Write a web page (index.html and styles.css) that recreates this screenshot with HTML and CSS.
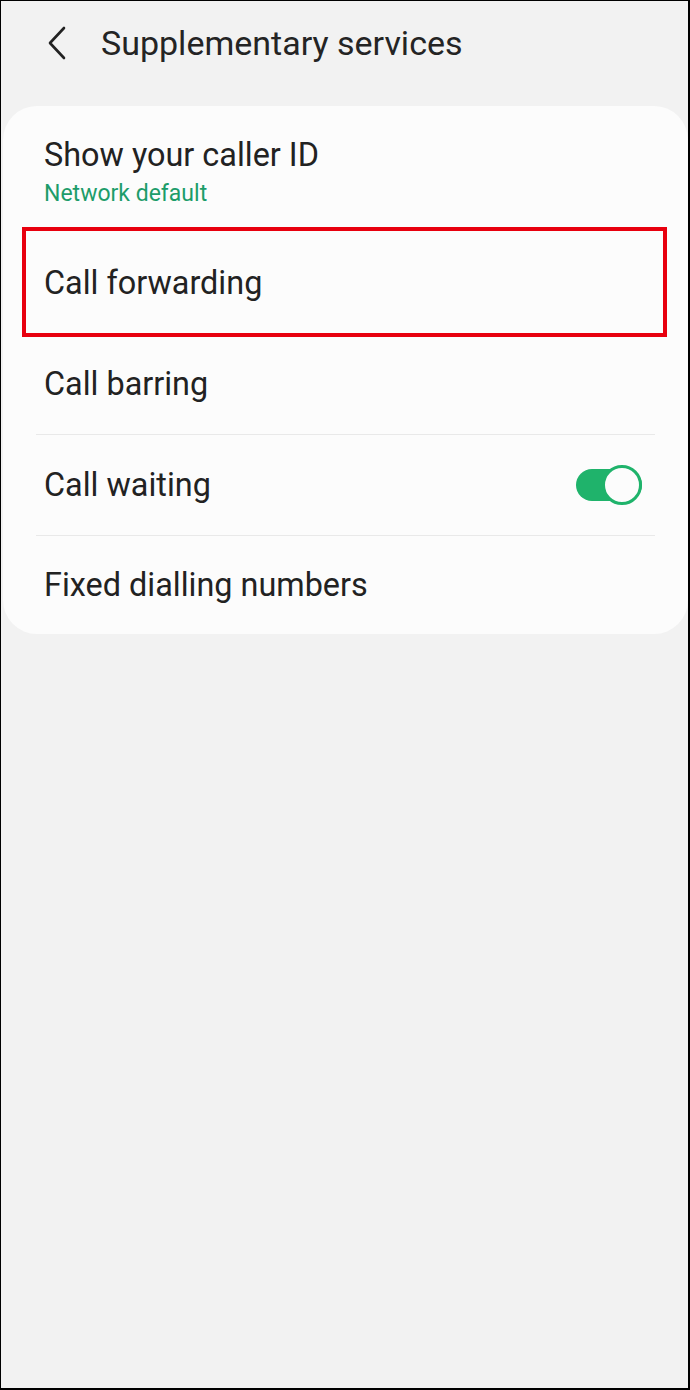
FILE: index.html
```html
<!DOCTYPE html>
<html>
<head>
<meta charset="utf-8">
<link rel="stylesheet" href="styles.css">
</head>
<body>
<div class="screen">
  <header class="topbar">
    <svg class="back" width="24" height="34" viewBox="0 0 24 34"><path d="M19 2 L5 17 L19 32" fill="none" stroke="#222" stroke-width="2.6" stroke-linecap="round" stroke-linejoin="round"/></svg>
    <h1 class="title">Supplementary services</h1>
  </header>
  <section class="card">
    <div class="row row-first">
      <div class="label">Show your caller ID</div>
      <div class="sub">Network default</div>
    </div>
    <div class="row row-hl">
      <div class="label">Call forwarding</div>
      <div class="highlight"></div>
    </div>
    <div class="row">
      <div class="label">Call barring</div>
    </div>
    <div class="divider"></div>
    <div class="row row-toggle">
      <div class="label">Call waiting</div>
      <div class="toggle"><div class="thumb"></div></div>
    </div>
    <div class="divider"></div>
    <div class="row row-last">
      <div class="label">Fixed dialling numbers</div>
    </div>
  </section>
</div>
</body>
</html>
```
FILE: styles.css
```css
* { box-sizing: border-box; }
html, body { margin: 0; padding: 0; }
body { width: 690px; height: 1390px; background: #f2f2f2; font-family: Roboto, "Liberation Sans", sans-serif; color: #222; }
.screen {
  width: 690px; height: 1390px;
  border-left: 1px solid #000; border-top: 1px solid #000;
  border-right: 2px solid #000; border-bottom: 2px solid #000;
  background: #f2f2f2;
}
.topbar { height: 105px; display: flex; align-items: flex-start; padding-top: 24px; padding-left: 44px; }
.back { margin-top: 1px; }
.title { margin: 0 0 0 32px; font-weight: 400; font-size: 34px; line-height: 36px; letter-spacing: 0; color: #242424; }
.card { margin: 0 0 0 2px; width: 685px; background: #fcfcfc; border-radius: 34px; padding-bottom: 0; }
.row { position: relative; display: flex; align-items: center; height: 100px; padding-left: 41px; padding-right: 46px; }
.row-first { height: 125px; flex-direction: column; align-items: flex-start; justify-content: flex-start; padding-top: 31px; }
.label { font-size: 32.4px; line-height: 36px; color: #222; }
.sub { font-size: 23px; line-height: 26px; color: #1d9c6a; margin-top: 8px; }
.row-hl { height: 103px; }
.row-last { height: 98px; }
.row-toggle { justify-content: space-between; }
.highlight { position: absolute; left: 19px; top: -4px; width: 645px; height: 110px; border: 4px solid #e8000e; }
.divider { height: 1px; background: #e9e9e9; margin: 0 33px 0 33px; }
.toggle { position: relative; width: 66px; height: 32px; border-radius: 16px; background: #1fb36b; }
.thumb { position: absolute; right: 0; top: -4px; width: 40px; height: 40px; border-radius: 50%; background: #fcfcfc; border: 3px solid #1fb36b; }
```
